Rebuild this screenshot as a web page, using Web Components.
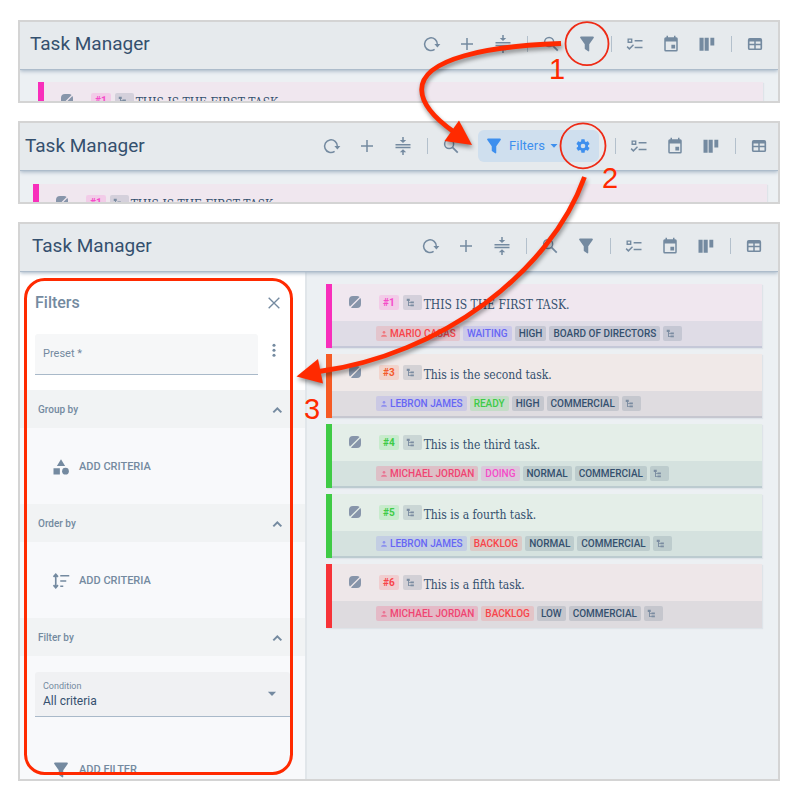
<!DOCTYPE html>
<html lang="en">
<head>
<meta charset="utf-8">
<meta name="viewport" content="width=device-width, initial-scale=1">
<title>Task Manager filters</title>
<style>
  body { margin: 0; background: #fff; font-family: Roboto, "Liberation Sans", sans-serif; color: #34506e; }
</style>
</head>
<body>
<filter-guide></filter-guide>
<script>
const ICONS = {
  refresh: '<path d="M20.500 12.500A8.500 8.500 0 1 0 16.800 19.300" fill="none" stroke="currentColor" stroke-width="2"/><path d="M16.500 12h8l-4 4.600z"/>',
  plus: '<path d="M11 4h2V11h7v2H13v7h-2V13H4v-2h7z"/>',
  compress: '<path d="M11 0h2v4h3.300L12 8 7.700 4H11zM2 9.200h20v2H2zM2 13h20v2H2zM12 16.200l4.300 4H13V24h-2v-3.800H7.700z"/>',
  search: '<circle cx="9.500" cy="9.300" r="6" fill="none" stroke="currentColor" stroke-width="2"/><path d="M14 13.800l7 7" stroke="currentColor" stroke-width="2.400"/>',
  filter: '<path d="M4 2h16c1 0 1.500 1.200.9 2L15 12.200V21c0 .8-.9 1.200-1.500.7L9.600 19c-.4-.3-.6-.6-.6-1v-5.800L3.100 4C2.500 3.200 3 2 4 2z"/>',
  checks: '<path d="M2 4.500h6.500v6H2zM3.800 6.200v2.600h2.900V6.200zM11.500 6.500H22v2H11.500zM11.500 15.500H22v2H11.500z" fill-rule="evenodd"/><path d="M1.500 15.500l3 3L10 13" fill="none" stroke="currentColor" stroke-width="1.900"/>',
  calendar: '<path d="M12.500 13h5v5h-5zM16 1v2H8V1H6v2H5a2 2 0 0 0-2 2v15a2 2 0 0 0 2 2h14a2 2 0 0 0 2-2V5a2 2 0 0 0-2-2h-1V1zm3 19H5V8.500h14z" fill-rule="evenodd"/>',
  columns: '<path d="M2 3.500h5.500v17.500H2zM8.800 3.500h5.500v17.500H8.800zM16.500 3.500h5.200V14h-5.200z"/>',
  table: '<path d="M5 4h14a2.500 2.500 0 0 1 2.500 2.500v11A2.500 2.500 0 0 1 19 20H5a2.500 2.500 0 0 1-2.500-2.500v-11A2.500 2.500 0 0 1 5 4zM4.700 8.500v3H11v-3zm8.300 0v3h6.300v-3zM4.700 13.500V18H11v-4.500zm8.300 0V18h6.300v-4.500z" fill-rule="evenodd"/>',
  gear: '<path d="M12 15.500A3.500 3.500 0 0 1 8.500 12 3.500 3.500 0 0 1 12 8.500a3.500 3.500 0 0 1 3.500 3.500 3.500 3.500 0 0 1-3.500 3.500m7.430-2.530c.04-.32.07-.64.07-.97s-.03-.66-.07-1l2.110-1.630c.19-.15.24-.42.12-.64l-2-3.460c-.12-.22-.39-.31-.61-.22l-2.490 1c-.52-.39-1.060-.73-1.690-.98l-.37-2.650A.506.506 0 0 0 14 2h-4c-.25 0-.46.18-.5.420l-.37 2.650c-.63.250-1.170.590-1.690.980l-2.490-1c-.22-.09-.49 0-.61.220l-2 3.460c-.13.220-.07.490.12.640L4.570 11c-.04.340-.07.670-.07 1s.03.650.07.970l-2.110 1.660c-.19.150-.25.420-.12.640l2 3.460c.12.220.390.300.610.220l2.490-1.010c.52.400 1.060.740 1.690.990l.37 2.650c.04.240.250.420.500.420h4c.25 0 .46-.18.500-.42l.37-2.650c.63-.26 1.170-.59 1.690-.99l2.490 1.010c.22.080.490 0 .61-.22l2-3.460c.12-.22.070-.49-.12-.64z"/>',
  caret: '<path d="M5 8h14l-7 7.500z"/>',
  close: '<path d="M4 4l16 16M20 4L4 20" stroke="currentColor" stroke-width="2"/>',
  kebab: '<circle cx="12" cy="5" r="2.300"/><circle cx="12" cy="12.500" r="2.300"/><circle cx="12" cy="20" r="2.300"/>',
  chevron: '<path d="M6.500 15.500L12.500 9.500l6 6" fill="none" stroke="currentColor" stroke-width="3"/>',
  shapes: '<path d="M12 1.500l5.500 9H6.500zM2 13.500h8.500v8.500H2z"/><circle cx="18" cy="17.500" r="4.500"/>',
  sort: '<path d="M5 4v16M2 6.500l3-3.500 3 3.500M2 17.500l3 3.500 3-3.500M11 5h12M11 12h8M11 19h4" fill="none" stroke="currentColor" stroke-width="2.200"/>',
  blocked: '<path d="M8 0h8c2 0 3.800.7 5.200 2L2 21.200A7.700 7.700 0 0 1 0 16V8a8 8 0 0 1 8-8zM22.800 4.200c.8 1.200 1.200 2.400 1.200 3.800v8a8 8 0 0 1-8 8H8c-1.500 0-2.800-.4-4-1.200z"/>',
  tree: '<path d="M2 2h8v6H8v3h4V9h9v5h-9v-1H8v6h4v-2h9v5h-9v-1H5.500V8H2z"/>',
  person: '<circle cx="12" cy="7" r="4"/><path d="M3 20c0-8 18-8 18 0z"/>'
};

class UiIcon extends HTMLElement {
  connectedCallback() {
    this.attachShadow({ mode: 'open' }).innerHTML = `
      <style>
        :host { display: inline-flex; width: var(--icon, 18px); height: var(--icon, 18px); flex: none; }
        svg { width: 100%; height: 100%; fill: currentColor; overflow: visible; }
      </style>
      <svg viewBox="0 0 24 24" aria-hidden="true">${ICONS[this.getAttribute('name')]}</svg>`;
  }
}
customElements.define('ui-icon', UiIcon);

class AppToolbar extends HTMLElement {
  connectedCallback() {
    const btn = (icon, label) => `<button aria-label="${label}"><ui-icon name="${icon}"></ui-icon></button>`;
    const filter = this.hasAttribute('active')
      ? `<div class="pill"><button class="menu"><ui-icon name="filter"></ui-icon><span>Filters</span><ui-icon class="caret" name="caret"></ui-icon></button>
         <button class="gear" aria-label="Filter settings"><ui-icon name="gear"></ui-icon></button></div>`
      : btn('filter', 'Filters');
    this.attachShadow({ mode: 'open' }).innerHTML = `
      <style>
        :host { display: flex; align-items: center; justify-content: space-between; box-sizing: border-box; height: 48px;
          padding: 0 var(--bar-end, 5px) var(--bar-low, 4px) var(--bar-start, 10px); background: #e6eaed; border-bottom: 1px solid #adbccb;
          box-shadow: 0 1px 4px #9fb0c2; position: relative; z-index: 1; }
        h1 { margin: 0; font-size: 19px; line-height: 24px; font-weight: 400; color: #34506e; white-space: nowrap; }
        nav { display: flex; align-items: center; color: #748aa0; }
        button { display: flex; align-items: center; justify-content: center; width: 36px; height: 32px; padding: 0; border: 0;
          background: none; color: inherit; font: inherit; }
        hr { width: 1px; height: 16px; margin: 0 5px 0 6px; border: 0; background: #b3c0cc; }
        .pill { display: flex; align-items: center; height: 32px; margin: 0 10px 0 9px; border-radius: 6px; background: #cfdfee; color: #3d8fee; }
        .menu { width: 89px; gap: 6px; }
        .menu span { font-size: 13px; font-weight: 400; }
        .gear { width: 32px; --icon: 16px; }
        .caret { --icon: 12px; margin-left: -3px; }
      </style>
      <h1>Task Manager</h1>
      <nav aria-label="Tools">
        ${btn('refresh', 'Refresh')}${btn('plus', 'Add')}${btn('compress', 'Collapse')}<hr>
        ${btn('search', 'Search')}${filter}<hr>
        ${btn('checks', 'Checklist')}${btn('calendar', 'Calendar')}${btn('columns', 'Board')}<hr>
        ${btn('table', 'Table')}
      </nav>`;
  }
}
customElements.define('app-toolbar', AppToolbar);

class TagChip extends HTMLElement {
  connectedCallback() {
    const icon = this.getAttribute('icon');
    this.attachShadow({ mode: 'open' }).innerHTML = `
      <style>
        :host { display: inline-flex; align-items: center; box-sizing: border-box; height: 15px; padding: 0 4px; gap: 2px; border-radius: 2px;
          font-size: 10px; line-height: 15px; font-weight: 500; white-space: nowrap; color: #34506e; background: #34506e26; --icon: 8px; }
        :host([tone="red"]) { color: #f8444a; background: #ff404026; }
        :host([tone="rose"]) { color: #f04472; background: #ff306030; }
        :host([tone="pink"]) { color: #f54bc8; background: #ff40c828; }
        :host([tone="blue"]) { color: #6767f5; background: #6060ff26; }
        :host([tone="green"]) { color: #3dcb48; background: #30dd4028; }
        :host([tone="orange"]) { color: #f45a2c; background: #ff603026; }
        :host([icon="tree"]) { width: 19px; padding: 0 3px; color: #7b8ca1; --icon: 9px; }
        :host([big]) { font-weight: 700; }
        ui-icon[name="person"] { opacity: .6; }
      </style>
      ${icon ? `<ui-icon name="${icon}"></ui-icon>` : ''}<slot></slot>`;
  }
}
customElements.define('tag-chip', TagChip);

class TaskRow extends HTMLElement {
  connectedCallback() {
    this.attachShadow({ mode: 'open' }).innerHTML = `
      <style>
        :host { display: block; border-left: 6px solid var(--bar); background: var(--top); box-shadow: 1px 1px 1px #c3ccd555; }
        :host, :host([color="pink"]) { --bar: #f82fbb; --top: #f0e7ef; --low: #dfdce6; --edge: #c5c8d8; }
        :host([color="orange"]) { --bar: #f65a24; --top: #f0e9e8; --low: #dfdce0; --edge: #c6c7d0; }
        :host([color="green"]) { --bar: #3fcb45; --top: #e4eee8; --low: #d5e2df; --edge: #bccbd0; }
        :host([color="red"]) { --bar: #f73338; --top: #eee7e9; --low: #dedbdf; --edge: #dedbdf; }
        .head { display: flex; align-items: flex-start; height: 37px; box-sizing: border-box; padding: 11px 12px 0 17px; }
        .state { --icon: 12px; color: #8795aa; margin: 1px 18px 0 0; }
        .head tag-chip { margin-right: 4px; }
        .head tag-chip:nth-of-type(2) { margin-right: 2px; }
        .name { font-family: "Roboto Slab", "DejaVu Serif Condensed", "DejaVu Serif", serif; font-size: 12px; line-height: 20px; white-space: nowrap; }
        .foot { display: flex; gap: 3px; padding: 5px 12px 5px 44px; background: var(--low); border-bottom: 2px solid var(--edge); }
      </style>
      <div class="head">
        <ui-icon class="state" name="blocked"></ui-icon>
        <tag-chip big tone="${this.getAttribute('color')}">${this.getAttribute('number')}</tag-chip>
        <tag-chip big icon="tree"></tag-chip>
        <span class="name"><slot name="name"></slot></span>
      </div>
      <div class="foot"><slot></slot><tag-chip icon="tree"></tag-chip></div>`;
  }
}
customElements.define('task-row', TaskRow);

class FilterSection extends HTMLElement {
  connectedCallback() {
    this.attachShadow({ mode: 'open' }).innerHTML = `
      <style>
        :host { display: block; background: #f8f9fb; color: #748aa0; }
        h3 { margin: 0; }
        h3 button { display: flex; align-items: center; justify-content: space-between; width: 100%; height: 38px; padding: 2px 20px 0 18px;
          border: 0; background: #f1f3f4; color: inherit; font: 500 10px/16px Roboto, sans-serif; --icon: 16px; }
        .add { display: flex; align-items: center; gap: 9px; height: 76px; padding: 2px 0 0 32px; border: 0; background: none; color: inherit;
          font: 500 11px/16px Roboto, sans-serif; --icon: 18px; }
      </style>
      <h3><button aria-expanded="true">${this.getAttribute('heading')}<ui-icon name="chevron"></ui-icon></button></h3>
      <slot></slot>
      <button class="add"><ui-icon name="${this.getAttribute('icon')}"></ui-icon>${this.getAttribute('action')}</button>`;
  }
}
customElements.define('filter-section', FilterSection);

class FilterPanel extends HTMLElement {
  connectedCallback() {
    this.attachShadow({ mode: 'open' }).innerHTML = `
      <style>
        :host { display: block; flex: 0 0 285px; overflow: hidden; border-right: 2px solid #e1e6ea; background: #f8f9fb; color: #748aa0; }
        .top { background: #fff; padding: 0 15px 15px; }
        header, .row { display: flex; align-items: center; justify-content: space-between; }
        header { height: 62px; }
        h2 { margin: 0; font-size: 16px; line-height: 20px; font-weight: 500; }
        .row { align-items: flex-start; }
        .icon { display: flex; align-items: center; justify-content: center; width: 32px; height: 32px; padding: 0; border: 0; background: none; color: inherit; --icon: 16px; }
        .field { display: grid; flex: 1; border-bottom: 1px solid #a9b9c9; border-radius: 3px 3px 0 0; background: #f6f7f8; }
        .field > * { grid-area: 1 / 1; }
        label { align-self: center; padding-left: 8px; font-size: 11px; line-height: 16px; pointer-events: none; z-index: 1; }
        input, select { appearance: none; width: 100%; box-sizing: border-box; height: 40px; margin: 0; padding: 0 8px; border: 0; background: none;
          color: #34506e; font: 12px/16px Roboto, sans-serif; }
        .choice { margin: 16px 15px 14px; background: #f0f1f3; }
        .choice label { align-self: start; padding-top: 6px; font-size: 9px; }
        .choice select { height: 44px; padding-top: 14px; }
        .choice ui-icon { --icon: 14px; place-self: center end; margin-right: 11px; pointer-events: none; }
      </style>
      <div class="top">
        <header><h2>Filters</h2><button class="icon" aria-label="Close"><ui-icon name="close"></ui-icon></button></header>
        <div class="row">
          <div class="field"><label for="preset">Preset *</label><input id="preset" type="text" required></div>
          <button class="icon" aria-label="Preset options"><ui-icon name="kebab"></ui-icon></button>
        </div>
      </div>
      <filter-section heading="Group by" icon="shapes" action="ADD CRITERIA"></filter-section>
      <filter-section heading="Order by" icon="sort" action="ADD CRITERIA"></filter-section>
      <filter-section heading="Filter by" icon="filter" action="ADD FILTER">
        <div class="field choice"><label for="condition">Condition</label><select id="condition"><option>All criteria</option></select><ui-icon name="caret"></ui-icon></div>
      </filter-section>`;
  }
}
customElements.define('filter-panel', FilterPanel);

class GuideMarks extends HTMLElement {
  connectedCallback() {
    this.attachShadow({ mode: 'open' }).innerHTML = `
      <style>
        :host { display: block; position: absolute; top: 0; left: 0; z-index: 5; pointer-events: none; }
        svg { display: block; }
        .line { fill: none; stroke: #ff2a00; }
        .arrow { filter: drop-shadow(1px 3px 2px #0006); }
        text { font-family: "Liberation Sans", Arial, sans-serif; font-size: 29px; fill: #ff2a00; }
      </style>
      <svg width="800" height="800" viewBox="0 0 800 800">
        <circle class="line" cx="587" cy="43.700" r="21.500" stroke-width="1.800" style="stroke:#ee2b16"/>
        <circle class="line" cx="583" cy="145.800" r="22.500" stroke-width="1.800" style="stroke:#ee2b16"/>
        <rect class="line" x="25.500" y="279.500" width="266" height="494" rx="19" stroke-width="3"/>
        <g class="arrow">
          <path class="line" stroke-width="4.800" d="M561 43.500C490 46 421 58 421.700 90C422 105 437 120 454 132"/>
          <path fill="#ff2a00" d="M472 145L459 120.500L444.500 141z"/>
        </g>
        <g class="arrow">
          <path class="line" stroke-width="4.800" d="M584.500 177C550 273 440 355 319 371.500"/>
          <path fill="#ff2a00" d="M296.500 376.500L318 359L323 383.500z"/>
        </g>
        <text x="549" y="79">1</text><text x="602" y="188">2</text><text x="304" y="419">3</text>
      </svg>`;
  }
}
customElements.define('guide-marks', GuideMarks);

class FilterGuide extends HTMLElement {
  connectedCallback() {
    const chips = (...list) => list.map(([text, tone = '', icon = '']) =>
      `<tag-chip tone="${tone}" ${icon && `icon="${icon}"`}>${text}</tag-chip>`).join('');
    const row = (number, color, name, ...list) =>
      `<task-row number="#${number}" color="${color}"><span slot="name">${name}</span>${chips(...list)}</task-row>`;
    const peek = row(1, 'pink', 'THIS IS THE FIRST TASK.');
    this.attachShadow({ mode: 'open' }).innerHTML = `
      <style>
        :host { display: flex; flex-direction: column; gap: 18px; box-sizing: border-box; height: 100vh; padding: 20px 20px 19px 18px; position: relative; overflow: hidden; }
        section { border: 2px solid #d4d4d4; background: #ecf0f3; overflow: hidden; flex: none; }
        .peek { height: 31px; overflow: hidden; box-sizing: border-box; padding: 12px 15px 0 18px; }
        .two { --bar-start: 5px; --bar-end: 1px; --bar-low: 2px; }
        .two .peek { padding: 13px 11px 0 13px; }
        .three { --bar-start: 12px; --bar-end: 6px; flex: 1; min-height: 0; display: flex; flex-direction: column; }
        .work { display: flex; flex: 1; min-height: 0; }
        .list { flex: 1; min-width: 0; display: flex; flex-direction: column; gap: 6px; padding: 12px 16px 12px 19px; }
        app-toolbar { flex: none; }
      </style>
      <section><app-toolbar></app-toolbar><div class="peek">${peek}</div></section>
      <section class="two"><app-toolbar active></app-toolbar><div class="peek">${peek}</div></section>
      <section class="three"><app-toolbar></app-toolbar>
        <div class="work">
          <filter-panel></filter-panel>
          <div class="list">
            ${row(1, 'pink', 'THIS IS THE FIRST TASK.', ['MARIO CASAS', 'red', 'person'], ['WAITING', 'blue'], ['HIGH'], ['BOARD OF DIRECTORS'])}
            ${row(3, 'orange', 'This is the second task.', ['LEBRON JAMES', 'blue', 'person'], ['READY', 'green'], ['HIGH'], ['COMMERCIAL'])}
            ${row(4, 'green', 'This is the third task.', ['MICHAEL JORDAN', 'rose', 'person'], ['DOING', 'pink'], ['NORMAL'], ['COMMERCIAL'])}
            ${row(5, 'green', 'This is a fourth task.', ['LEBRON JAMES', 'blue', 'person'], ['BACKLOG', 'red'], ['NORMAL'], ['COMMERCIAL'])}
            ${row(6, 'red', 'This is a fifth task.', ['MICHAEL JORDAN', 'rose', 'person'], ['BACKLOG', 'red'], ['LOW'], ['COMMERCIAL'])}
          </div>
        </div>
      </section>
      <guide-marks></guide-marks>`;
  }
}
customElements.define('filter-guide', FilterGuide);
</script>
</body>
</html>
